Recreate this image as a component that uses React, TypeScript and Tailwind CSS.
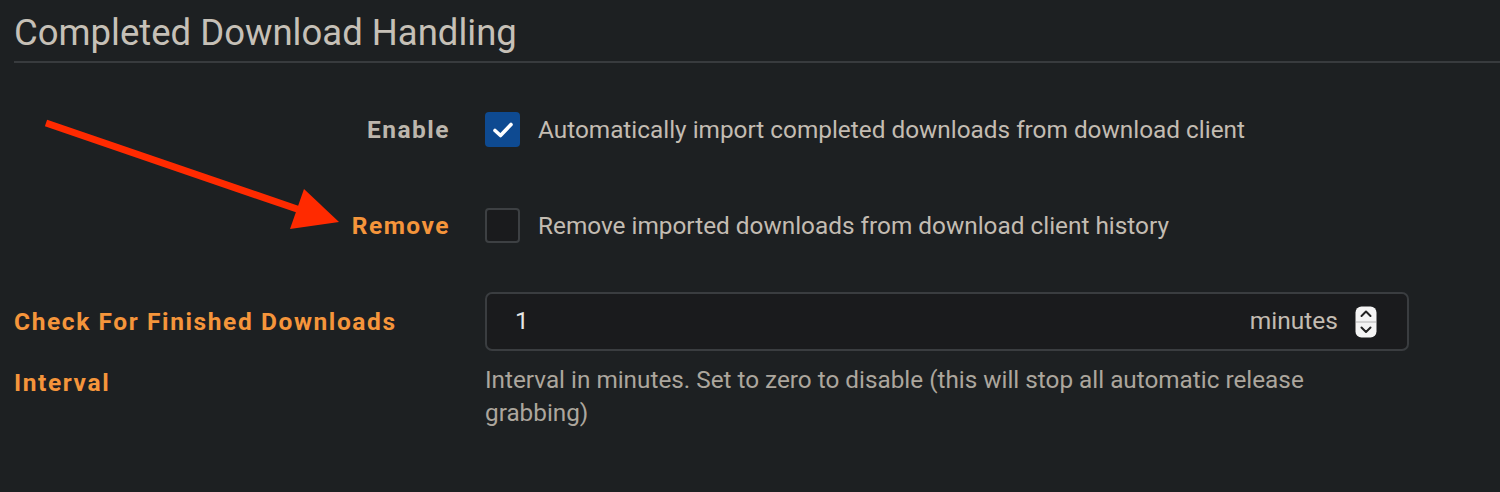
import type { ReactNode } from "react"

const ArrowOverlay = () => (
    <svg className="absolute left-0 top-0 pointer-events-none" width="360" height="250" viewBox="0 0 360 250">
        <line x1="46" y1="123" x2="300" y2="210" stroke="#ff2a00" strokeWidth="7" />
        <polygon points="304,189 339,222 290,229" fill="#ff2a00" />
    </svg>
)

interface CheckRowProps {
    label: string;
    text: string;
    checked?: boolean;
    warn?: boolean;
}

function CheckRow(props: CheckRowProps) {
    return (
        <div className="flex items-center h-[60px]">
            <div
                className={`w-[436px] text-right font-bold text-[24.5px] tracking-[1.5px]
                    ${props.warn ? "text-[#f5953b]" : "text-[#bcb6ad]"}`}
            >
                {props.label}
            </div>
            <div className="ml-[35px] flex items-center gap-[18px]">
                {props.checked ? (
                    <span className="w-[35px] h-[35px] rounded-[4px] bg-[#0e4a91] flex items-center justify-center">
                        <svg width="22" height="18" viewBox="0 0 22 18">
                            <path d="M3 9.5 L8.5 14.5 L19 3.5" fill="none" stroke="#fff" strokeWidth="3.6" strokeLinecap="round" strokeLinejoin="round" />
                        </svg>
                    </span>
                ) : (
                    <span className="w-[35px] h-[35px] rounded-[4px] bg-[#1a1b1d] border-2 border-[#3d4043]" />
                )}
                <span className="text-[24.35px] text-[#c3bcb2]">{props.text}</span>
            </div>
        </div>
    )
}

const Spinner = () => (
    <svg width="22" height="32" viewBox="0 0 22 32">
        <rect x="0.5" y="0.5" width="21" height="31" rx="6" fill="#f4f4f4" />
        <line x1="1" y1="16" x2="21" y2="16" stroke="#c9c9c9" strokeWidth="1.5" />
        <path d="M6.5 10 L11 5.5 L15.5 10" fill="none" stroke="#222" strokeWidth="2" strokeLinecap="round" strokeLinejoin="round" />
        <path d="M6.5 21.5 L11 26 L15.5 21.5" fill="none" stroke="#222" strokeWidth="2" strokeLinecap="round" strokeLinejoin="round" />
    </svg>
)

function Section(props: { title: string; children: ReactNode }) {
    return (
        <div className="pl-[14px]">
            <div className="pt-[11px] h-[63px] border-b-2 border-[#383b3e] text-[36.5px] leading-[1.2] text-[#c6c0b7]">
                {props.title}
            </div>
            {props.children}
        </div>
    )
}

export default function App() {
    return (
        <div
            className="relative w-[1500px] h-[492px] overflow-hidden bg-[#1d2022]"
            style={{ fontFamily: "Roboto, 'Noto Sans', sans-serif" }}
        >
            <Section title="Completed Download Handling">
                <div className="mt-[37px] flex flex-col gap-[36px]">
                    <CheckRow
                        label="Enable"
                        text="Automatically import completed downloads from download client"
                        checked
                    />
                    <CheckRow
                        label="Remove"
                        text="Remove imported downloads from download client history"
                        warn
                    />

                    {/* Interval */}
                    <div className="flex">
                        <div className="w-[436px] -mt-[1px] font-bold text-[24.5px] leading-[61px] tracking-[1.6px] text-[#f5953b]">
                            Check For Finished Downloads<br />Interval
                        </div>
                        <div className="ml-[35px] w-[924px]">
                            <div className="h-[59px] rounded-[7px] border-2 border-[#3a3d40] bg-[#1a1b1d] flex items-center pl-[28px] pr-[30px]">
                                <span className="flex-1 text-[24.5px] text-[#e6e6e6]">1</span>
                                <span className="text-[24.5px] text-[#c3bcb2] mr-[17px]">minutes</span>
                                <Spinner />
                            </div>
                            <p className="mt-[12px] text-[24.3px] leading-[33px] text-[#aca69d] pr-[50px]">
                                Interval in minutes. Set to zero to disable (this will stop all automatic release grabbing)
                            </p>
                        </div>
                    </div>
                </div>
            </Section>
            <ArrowOverlay />
        </div>
    )
}
